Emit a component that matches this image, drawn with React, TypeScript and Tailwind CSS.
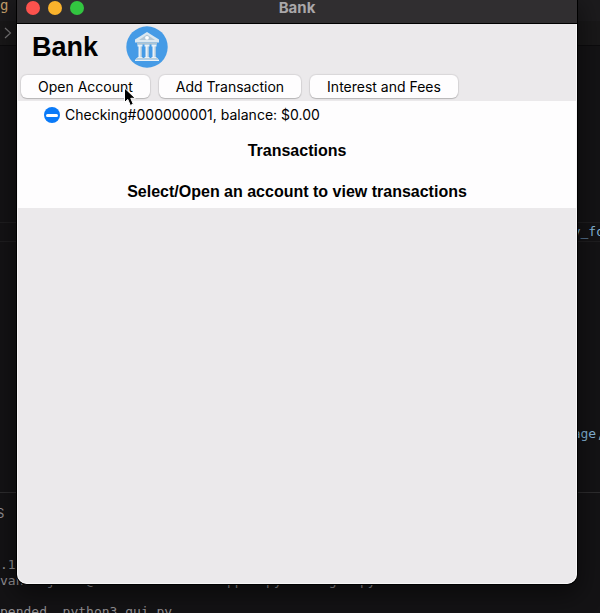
import React from "react";

function TitleBar() {
  return (
    <header className="grid h-6 shrink-0 grid-cols-[1fr_auto_1fr] items-center border-b border-black bg-[#302e30] px-[9px] pb-2">
      <div className="flex gap-2">
        <button aria-label="Close" className="size-[14px] rounded-full bg-[#fc524d]" />
        <button aria-label="Minimize" className="size-[14px] rounded-full bg-[#fab32c]" />
        <button aria-label="Zoom" className="size-[14px] rounded-full bg-[#32c540]" />
      </div>
      <h1 className="text-[15px] leading-[14px] font-bold text-[#a9a7a9]">Bank</h1>
      <span />
    </header>
  );
}

function BankLogo() {
  return (
    <svg viewBox="0 0 42 42" className="size-[42px]" aria-hidden="true">
      <circle cx="21" cy="21" r="20.7" fill="#459be6" />
      <path d="M21 6 33 13.5V16.5H9V13.5Z" fill="#dce8f0" />
      <path d="M21 8.5 29 14H13Z" fill="#b3c8d6" />
      <circle cx="21" cy="11.8" r="1.9" fill="#fff" />
      <path d="M11 16.5h20v2H11z" fill="#aec4d2" />
      <path d="M11.500 18.500h5v2h-1v10.500h1v1.500h-5v-1.500h1V20.500h-1zM18.500 18.500h5v2h-1v10.500h1v1.500h-5v-1.500h1V20.500h-1zM25.500 18.500h5v2h-1v10.500h1v1.500h-5v-1.500h1V20.500h-1z" fill="#eaf2f7" />
      <path d="M14.500 20.500h1V31h-1zM21.500 20.500h1V31h-1zM28.500 20.500h1V31h-1z" fill="#b3c8d6" />
      <path d="M10 32h22v1.500H10z" fill="#b9cdd9" />
      <path d="M9 33.500h24V35H9z" fill="#e9f1f6" />
    </svg>
  );
}

function ActionButton({ children }: { children: React.ReactNode }) {
  return (
    <button className="h-[23px] rounded-md bg-[#fefdfe] px-[17px] text-[14px] leading-5 whitespace-nowrap text-black shadow-[0_0_1px_1px_rgba(0,0,0,0.08),0_1px_1px_rgba(0,0,0,0.16)]">
      {children}
    </button>
  );
}

function Pointer() {
  return (
    <svg viewBox="0 0 14 20" className="pointer-events-none absolute top-3 left-[102px] h-5 w-[14px]" aria-hidden="true">
      <path d="M1.500 1v14.500l3.300-3.100 2.500 6 3-1.200-2.500-5.900h4.500Z" fill="#000" stroke="#fff" strokeWidth="1" strokeLinejoin="round" />
    </svg>
  );
}

function Editor() {
  return (
    <div className="absolute inset-0 flex flex-col overflow-hidden bg-[#141315] font-['DejaVu_Sans_Mono','Liberation_Mono',monospace] text-[13px] leading-4 text-[#949295]" aria-hidden="true">
      <div className="h-[21px] shrink-0 bg-[#1c1b1d] text-[14px] leading-[10px] text-[#c9a26e]">g</div>
      <div className="flex h-[25px] shrink-0 items-center border-b border-[#0c0b0d] bg-[#191819] pl-1">
        <svg viewBox="0 0 8 12" className="h-3 w-2" fill="none" stroke="#7b797b" strokeWidth="1.2">
          <path d="m1 1 5.500 5L1 11" />
        </svg>
      </div>
      <div className="flex min-h-0 flex-1 flex-col pt-[176px] text-[#86b7dc]">
        <div className="flex h-5 shrink-0 items-center justify-end border-y border-[#1f1e20]">
          <span className="-mr-1">y_fo</span>
        </div>
        <div className="mt-[182px] flex h-5 shrink-0 items-center justify-end">
          <span>age</span>
          <span className="-mr-1 text-[#aaa]">,</span>
        </div>
      </div>
      <div className="flex h-[121px] shrink-0 flex-col border-t border-[#2e2d2f] whitespace-pre">
        <span className="-ml-1 pt-3 font-['Inter',sans-serif]">S</span>
        <span className="pt-9">.1</span>
        <span>vansanjuvan@Evans-Air-3 bankapp % python3 gui.py</span>
        <span className="pt-[15px]">pended  python3 gui.py</span>
      </div>
    </div>
  );
}

export default function App() {
  return (
    <div className="relative flex h-screen flex-col overflow-hidden font-['Inter','Liberation_Sans',sans-serif]">
      <Editor />
      <div className="relative mr-[23px] mb-[29px] ml-[17px] flex min-h-0 flex-1 flex-col overflow-hidden rounded-b-[10px] bg-[#ebe9eb] shadow-[0_0_0_1px_#000,0_8px_24px_4px_rgba(0,0,0,0.45)]">
        <TitleBar />
        <main className="flex flex-1 flex-col rounded-b-[10px] border-x border-b border-[#f7f6f7]">
          <div className="flex h-[46px] items-center gap-7 pl-[14px] font-['Liberation_Sans',Arial,sans-serif]">
            <h2 className="text-[27px] leading-8 font-bold text-black">Bank</h2>
            <BankLogo />
          </div>
          <div className="flex items-center gap-[9px] pt-[5px] pb-[3px] pl-[3px]">
            <div className="relative flex">
              <ActionButton>Open Account</ActionButton>
              <Pointer />
            </div>
            <ActionButton>Add Transaction</ActionButton>
            <ActionButton>Interest and Fees</ActionButton>
          </div>
          <section className="flex flex-col bg-[#fefdfe] pb-[6px] text-black">
            <div className="flex h-7 items-center gap-[5px] pl-[26px] text-[14px] leading-5">
              <button aria-label="Close account" className="flex size-4 items-center justify-center rounded-full bg-[#0a7af8]">
                <span className="h-[3px] w-3 rounded-sm bg-white" />
              </button>
              <span>Checking#000000001, balance: $0.00</span>
            </div>
            <div className="flex flex-col items-center gap-[21px] pt-3 text-center font-['Liberation_Sans',Arial,sans-serif] text-[16px] leading-5 font-bold">
              <h3>Transactions</h3>
              <p>Select/Open an account to view transactions</p>
            </div>
          </section>
        </main>
      </div>
    </div>
  );
}
